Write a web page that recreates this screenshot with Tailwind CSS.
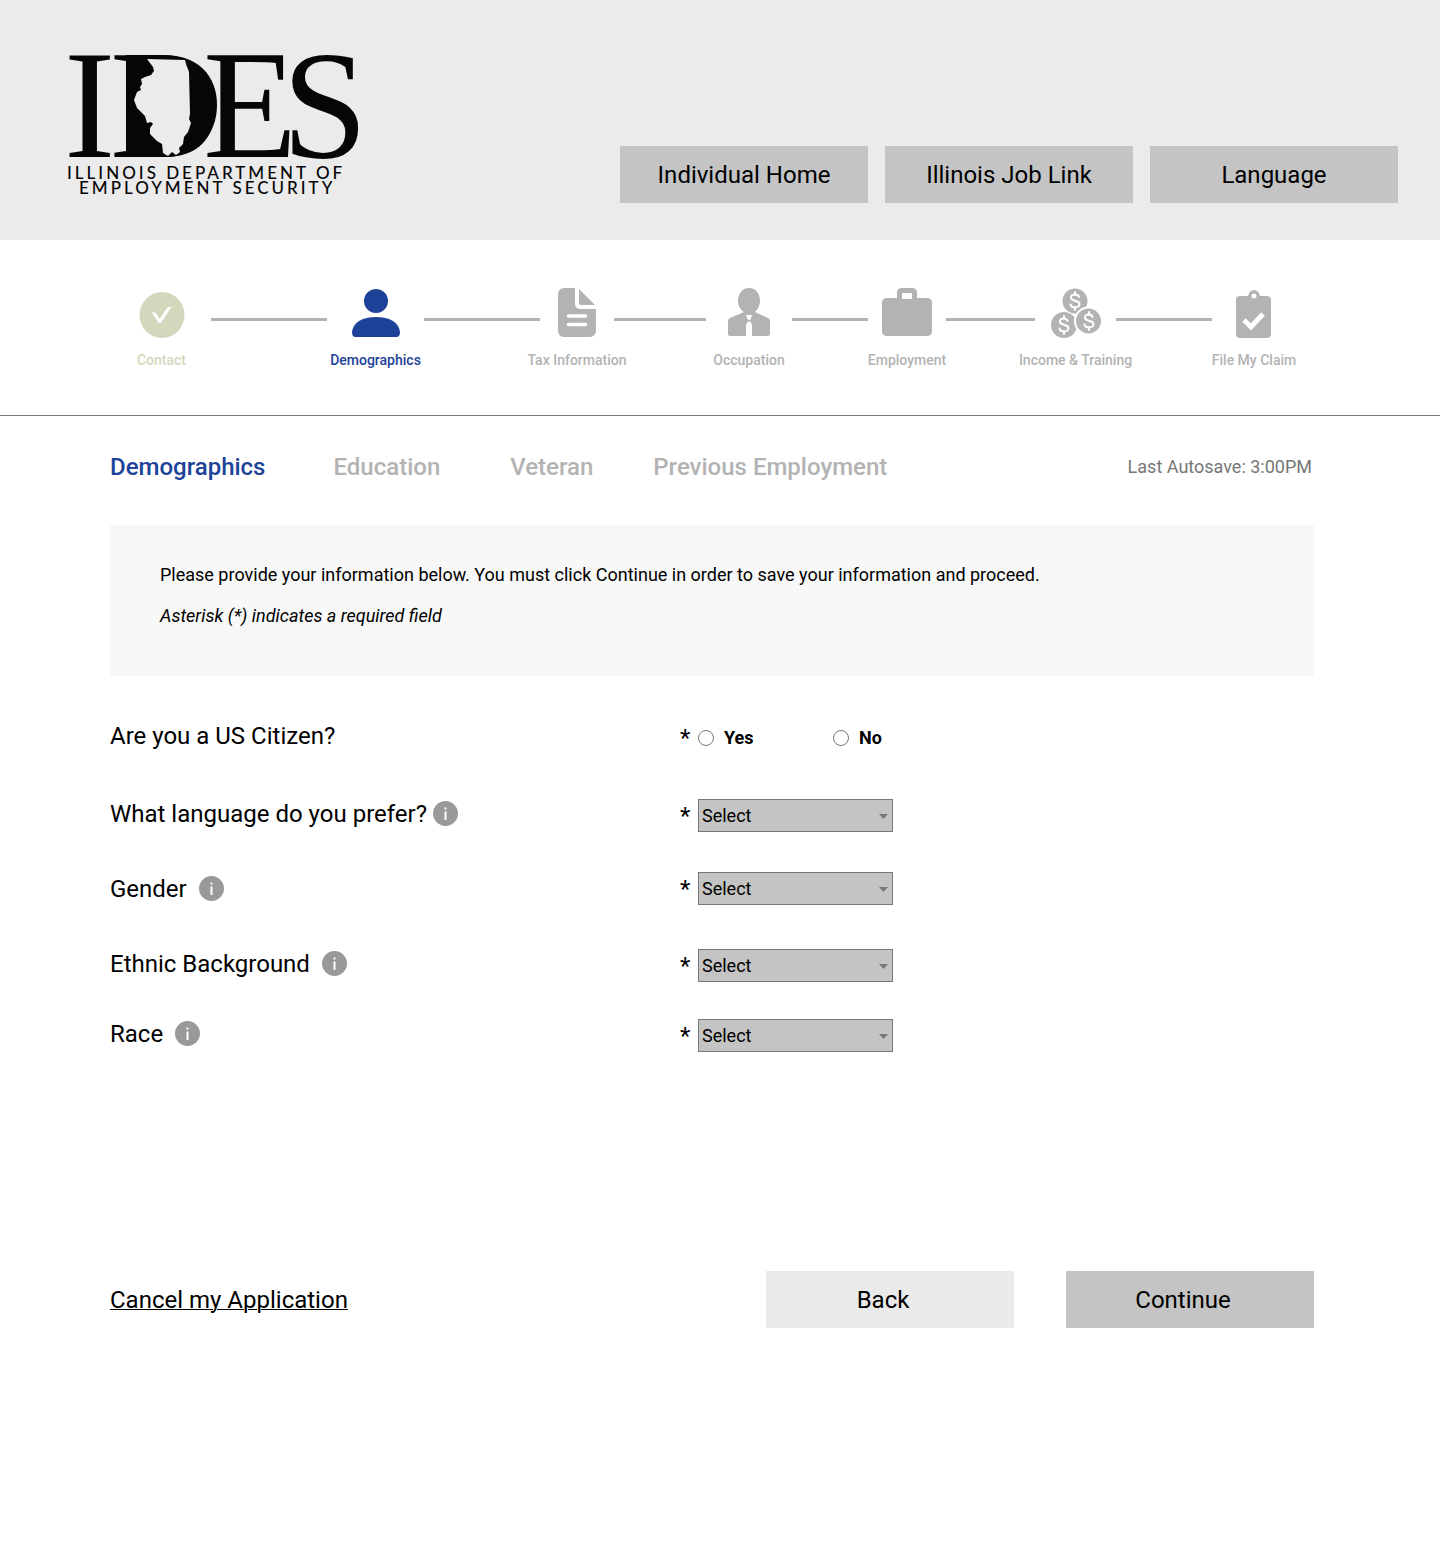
<!DOCTYPE html>
<html lang="en">
<head>
<meta charset="utf-8">
<meta name="viewport" content="width=device-width, initial-scale=1">
<title>IDES - Demographics</title>
<script src="https://cdn.jsdelivr.net/npm/@tailwindcss/browser@4"></script>
</head>
<body class="min-h-screen bg-white font-['Roboto',sans-serif] text-black">

<header class="flex h-60 items-start justify-between bg-[#ebebeb] pr-[42px] pl-[60px]">
  <svg class="mt-10 h-[165px] w-[300px] shrink-0 overflow-visible" viewBox="0 0 300 165" role="img" aria-label="Illinois Department of Employment Security">
    <g fill="#060606" class="font-['Liberation_Serif',serif] text-[154px]">
      <text x="4" y="117">I</text>
      <text x="50" y="117">D</text>
      <text x="143" y="117">E</text>
      <text x="222" y="117">S</text>
    </g>
    <path fill="#060606" d="M66 15H104C138 15 157 36 157 65C157 94 138 117 104 117H66Z"/>
    <path fill="#ebebeb" d="M87 19L125 20L126 24L129 32L130 74L129 79L131 83L128 92L124 97L123 104L119 108L120 112L116 115L112 112L108 116L103 113L102 104L97 101L90 94L90 88L93 84L91 82L87 83L85 76L77 68L74 60L77 52L81 50L80 47L82 44L81 39L85 37L91 35L94 31L93 27Z"/>
    <g fill="#060606" class="font-['Lato',sans-serif] text-[17px] font-medium tracking-[3px]">
      <text x="7" y="139">ILLINOIS DEPARTMENT OF</text>
      <text x="19" y="154">EMPLOYMENT SECURITY</text>
    </g>
  </svg>
  <nav class="mt-[146px] flex gap-[17px] text-2xl">
    <button type="button" class="h-[57px] w-[248px] bg-[#c4c4c4]">Individual Home</button>
    <button type="button" class="h-[57px] w-[248px] bg-[#c4c4c4]">Illinois Job Link</button>
    <button type="button" class="h-[57px] w-[248px] bg-[#c4c4c4]">Language</button>
  </nav>
</header>

<ol class="flex h-44 items-start border-b border-[#777] pt-12 pr-36 pl-28 text-sm font-medium whitespace-nowrap text-[#b3b3b3]">
  <li class="flex w-[99px] flex-col items-center gap-3 text-[#d4d7bc]">
    <svg class="h-[50px] w-[50px]" viewBox="0 0 50 50" fill="none"><ellipse cx="25" cy="27" rx="22.5" ry="23" fill="#d4d7bc"/><path d="M15 24.500Q17 23.500 19 25.500L22.500 31L30 20Q31.500 18 34.500 19L24.500 34Q22.500 36 21 34Z" fill="#fff"/></svg>
    <span>Contact</span>
  </li>
  <li aria-hidden="true" class="mt-[30px] h-[3px] flex-[116] bg-[#b3b3b3]"></li>
  <li class="flex w-[97px] flex-col items-center gap-3 text-[#1d4399]">
    <svg class="h-[50px] w-[50px]" viewBox="0 0 50 50" fill="currentColor"><circle cx="25" cy="13" r="12"/><path d="M1 44C2 34 12 29 25 29S48 34 49 44C49 47 48 49 45 49H5C2 49 1 47 1 44Z"/></svg>
    <span>Demographics</span>
  </li>
  <li aria-hidden="true" class="mt-[30px] h-[3px] flex-[116] bg-[#b3b3b3]"></li>
  <li class="flex w-[74px] flex-col items-center gap-3">
    <svg class="h-[50px] w-[50px]" viewBox="0 0 50 50" fill="currentColor"><path d="M12 0H23V15C23 19 25 21 29 21H44V43C44 46 41 49 38 49H12C9 49 6 46 6 43V6C6 3 9 0 12 0Z"/><path d="M27 1L43 17H29Q27 17 27 15Z"/><path d="M16.500 28H33.500M16.500 36.500H33.500" stroke="#fff" stroke-width="3.500" stroke-linecap="round"/></svg>
    <span>Tax Information</span>
  </li>
  <li aria-hidden="true" class="mt-[30px] h-[3px] flex-[92] bg-[#b3b3b3]"></li>
  <li class="flex w-[86px] flex-col items-center gap-3">
    <svg class="h-[50px] w-[50px]" viewBox="0 0 50 50" fill="currentColor"><path d="M25 0C32 0 36 6 36 13C36 18 33 22 31 24L44 30Q46 31 46 33V46Q46 48 44 48H6Q4 48 4 46V33Q4 31 6 30L20 24C17 22 14 18 14 13C14 6 18 0 25 0Z"/><path d="M22 27H28L26 32.500L28 37V48H22V37L24 32.500Z" fill="#fff"/><path d="M24.500 32L27 34L30 32M26 32L23 34L20 32" stroke="currentColor"/></svg>
    <span>Occupation</span>
  </li>
  <li aria-hidden="true" class="mt-[30px] h-[3px] flex-[76] bg-[#b3b3b3]"></li>
  <li class="flex w-[78px] flex-col items-center gap-3">
    <svg class="h-[50px] w-[50px]" viewBox="0 0 50 50" fill="currentColor"><path fill-rule="evenodd" d="M5 10H15V5Q15 0 20 0H30Q35 0 35 5V10H45Q50 10 50 15V43Q50 48 45 48H5Q0 48 0 43V15Q0 10 5 10ZM20 5V11H30V5Z"/></svg>
    <span>Employment</span>
  </li>
  <li aria-hidden="true" class="mt-[30px] h-[3px] flex-[89] bg-[#b3b3b3]"></li>
  <li class="flex w-[81px] flex-col items-center gap-3">
    <svg class="h-[50px] w-[50px]" viewBox="0 0 50 50" fill="currentColor">
      <circle cx="13" cy="37" r="13"/>
      <circle cx="24" cy="13" r="13.500" fill="#fff"/><circle cx="24" cy="13" r="12.500"/>
      <circle cx="37.500" cy="33" r="14.500" fill="#fff"/><circle cx="37.500" cy="33" r="12.500"/>
      <g fill="none" stroke="#fff" stroke-width="2" stroke-linecap="round">
        <path d="M28 9C27 5 19 6 20 10C21 14 29 12 28.500 16C28 21 20 20 19.500 16.500M24 4V7M24 19V22"/>
        <path d="M16.500 33C15.500 29 8 30 9 34C10 38 18 36 17.500 40C17 45 9 44 8.500 40.500M13 28V31M13 43V46"/>
        <path d="M41.500 29C40.500 25 33 26 34 30C35 34 43 32 42.500 36C42 41 34 40 33.500 36.500M38 24V27M38 39V42"/>
      </g>
    </svg>
    <span>Income &amp; Training</span>
  </li>
  <li aria-hidden="true" class="mt-[30px] h-[3px] flex-[96] bg-[#b3b3b3]"></li>
  <li class="flex w-[84px] flex-col items-center gap-3">
    <svg class="h-[50px] w-[50px]" viewBox="0 0 50 50" fill="currentColor"><path fill-rule="evenodd" d="M12 8H19C20 4 22 2 25 2S30 4 31 8H38Q42 8 42 12V46Q42 50 38 50H11Q7 50 7 46V12Q7 8 11 8ZM25 5.500A2.500 2.500 0 1 0 25 10.500A2.500 2.500 0 1 0 25 5.500Z"/><path d="M15 32L22 39L34 26" fill="none" stroke="#fff" stroke-width="5"/></svg>
    <span>File My Claim</span>
  </li>
</ol>

<main class="pr-[126px] pl-[110px]">
  <div class="flex items-center pt-[35px] text-2xl whitespace-nowrap">
    <nav class="flex font-medium text-[#b3b3b3]">
      <a href="#" aria-current="page" class="text-[#1d4399]">Demographics</a>
      <a href="#" class="ml-[68px]">Education</a>
      <a href="#" class="ml-[70px]">Veteran</a>
      <a href="#" class="ml-[60px]">Previous Employment</a>
    </nav>
    <p class="ml-auto pr-0.5 text-lg text-[#777]">Last Autosave: 3:00PM</p>
  </div>

  <section class="mt-[42px] bg-[#f8f8f8] px-[50px] pt-9 pb-[46px] text-lg/7">
    <p>Please provide your information below. You must click Continue in order to save your information and proceed.</p>
    <p class="mt-[13px] italic">Asterisk (*) indicates a required field</p>
  </section>

  <form>
    <div role="radiogroup" aria-labelledby="citizen-label" class="mt-[45px] flex h-[33px] items-center">
      <span id="citizen-label" class="w-[570px] pb-1 text-2xl">Are you a US Citizen?</span>
      <span class="w-[18px] text-2xl">*</span>
      <label class="flex w-[135px] items-center gap-2.5 text-lg font-bold"><input type="radio" name="citizen" class="h-4 w-4 appearance-none rounded-full border border-[#777] bg-white checked:bg-[#777]">Yes</label>
      <label class="flex items-center gap-2.5 text-lg font-bold"><input type="radio" name="citizen" class="h-4 w-4 appearance-none rounded-full border border-[#777] bg-white checked:bg-[#777]">No</label>
    </div>

    <div class="mt-[45px] flex h-[33px] items-center">
      <div class="flex w-[570px] items-center gap-1.5 pb-1 text-2xl">
        <label for="language">What language do you prefer?</label>
        <button type="button" aria-label="About language"><svg class="h-[25px] w-[25px]" viewBox="0 0 25 25"><circle cx="12.500" cy="12.500" r="12.500" fill="#999"/><path d="M11.500 6.500h2v2h-2zM11.500 10.500h2v8.500h-2z" fill="#fff"/></svg></button>
      </div>
      <span class="w-[18px] text-2xl">*</span>
      <div class="relative">
        <select id="language" class="h-[33px] w-[195px] appearance-none border border-[#777] bg-[#c4c4c4] pl-[3px] text-lg/7"><option>Select</option></select>
        <svg class="pointer-events-none absolute top-[15px] right-[5px] h-[5px] w-[9px]" viewBox="0 0 9 5" fill="#777"><path d="M0 0H9L4.500 5Z"/></svg>
      </div>
    </div>

    <div class="mt-10 flex h-[33px] items-center">
      <div class="flex w-[570px] items-center gap-3 text-2xl">
        <label for="gender">Gender</label>
        <button type="button" aria-label="About gender"><svg class="h-[25px] w-[25px]" viewBox="0 0 25 25"><circle cx="12.500" cy="12.500" r="12.500" fill="#999"/><path d="M11.500 6.500h2v2h-2zM11.500 10.500h2v8.500h-2z" fill="#fff"/></svg></button>
      </div>
      <span class="w-[18px] text-2xl">*</span>
      <div class="relative">
        <select id="gender" class="h-[33px] w-[195px] appearance-none border border-[#777] bg-[#c4c4c4] pl-[3px] text-lg/7"><option>Select</option></select>
        <svg class="pointer-events-none absolute top-[15px] right-[5px] h-[5px] w-[9px]" viewBox="0 0 9 5" fill="#777"><path d="M0 0H9L4.500 5Z"/></svg>
      </div>
    </div>

    <div class="mt-11 flex h-[33px] items-center">
      <div class="flex w-[570px] items-center gap-3 pb-1 text-2xl">
        <label for="ethnic">Ethnic Background</label>
        <button type="button" aria-label="About ethnic background"><svg class="h-[25px] w-[25px]" viewBox="0 0 25 25"><circle cx="12.500" cy="12.500" r="12.500" fill="#999"/><path d="M11.500 6.500h2v2h-2zM11.500 10.500h2v8.500h-2z" fill="#fff"/></svg></button>
      </div>
      <span class="w-[18px] text-2xl">*</span>
      <div class="relative">
        <select id="ethnic" class="h-[33px] w-[195px] appearance-none border border-[#777] bg-[#c4c4c4] pl-[3px] text-lg/7"><option>Select</option></select>
        <svg class="pointer-events-none absolute top-[15px] right-[5px] h-[5px] w-[9px]" viewBox="0 0 9 5" fill="#777"><path d="M0 0H9L4.500 5Z"/></svg>
      </div>
    </div>

    <div class="mt-[37px] flex h-[33px] items-center">
      <div class="flex w-[570px] items-center gap-3 pb-1 text-2xl">
        <label for="race">Race</label>
        <button type="button" aria-label="About race"><svg class="h-[25px] w-[25px]" viewBox="0 0 25 25"><circle cx="12.500" cy="12.500" r="12.500" fill="#999"/><path d="M11.500 6.500h2v2h-2zM11.500 10.500h2v8.500h-2z" fill="#fff"/></svg></button>
      </div>
      <span class="w-[18px] text-2xl">*</span>
      <div class="relative">
        <select id="race" class="h-[33px] w-[195px] appearance-none border border-[#777] bg-[#c4c4c4] pl-[3px] text-lg/7"><option>Select</option></select>
        <svg class="pointer-events-none absolute top-[15px] right-[5px] h-[5px] w-[9px]" viewBox="0 0 9 5" fill="#777"><path d="M0 0H9L4.500 5Z"/></svg>
      </div>
    </div>

    <div class="mt-[219px] flex items-center text-2xl">
      <a href="#" class="mr-auto underline decoration-1">Cancel my Application</a>
      <button type="button" class="h-[57px] w-[248px] bg-[#eaeaea] pr-3.5">Back</button>
      <button type="submit" class="ml-[52px] h-[57px] w-[248px] bg-[#c4c4c4] pr-3.5">Continue</button>
    </div>
  </form>
</main>
</body>
</html>
